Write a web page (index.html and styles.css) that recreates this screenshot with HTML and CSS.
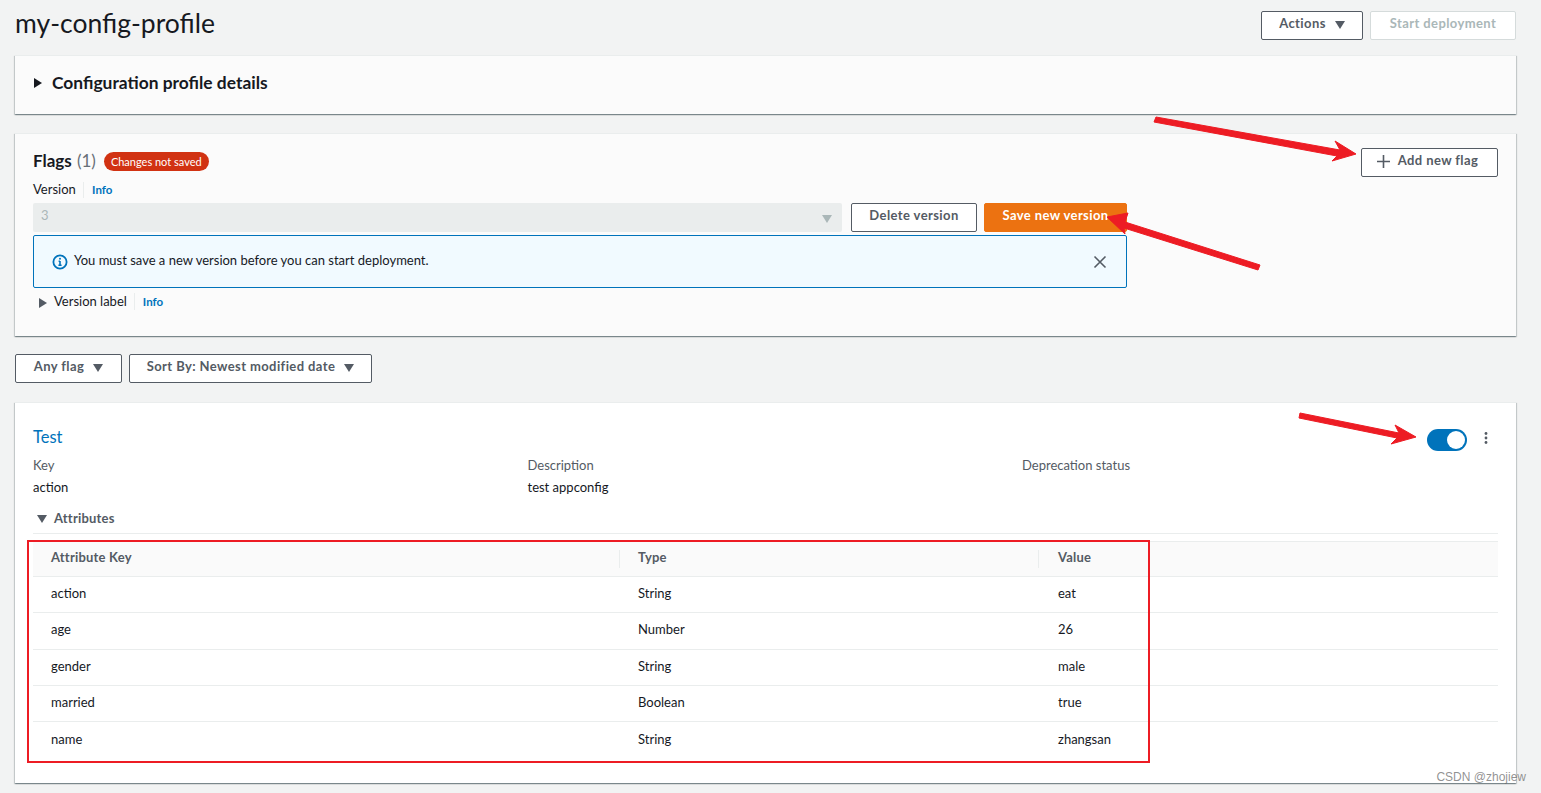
FILE: index.html
```html
<!DOCTYPE html>
<html lang="en">
<head>
    <meta charset="UTF-8">
    <meta name="viewport" content="width=device-width, initial-scale=1.0">
    <title>my-config-profile</title>
    <link rel="stylesheet" href="styles.css">
</head>
<body>
    <div class="page">
        <header class="page-header">
            <h1>my-config-profile</h1>
            <div class="header-actions">
                <button class="btn btn-actions">Actions <span class="caret"></span></button>
                <button class="btn btn-disabled">Start deployment</button>
            </div>
        </header>

        <section class="card card-details">
            <span class="tri-right tri-dark"></span>
            <h2>Configuration profile details</h2>
        </section>

        <section class="card card-flags">
            <div class="flags-head">
                <div class="flags-title">
                    <h2>Flags <span class="count">(1)</span></h2>
                    <span class="badge">Changes not saved</span>
                </div>
                <button class="btn btn-add">
                    <svg class="plus" width="13" height="13" viewBox="0 0 13 13"><path d="M6.5 0v13M0 6.5h13" stroke="#545b64" stroke-width="1.6" fill="none"/></svg>
                    Add new flag
                </button>
            </div>
            <div class="field-label">Version <a class="info" href="#">Info</a></div>
            <div class="version-row">
                <div class="select-disabled"><span class="select-value">3</span><span class="caret caret-muted"></span></div>
                <button class="btn btn-delete">Delete version</button>
                <button class="btn btn-primary">Save new version</button>
            </div>
            <div class="alert">
                <svg class="alert-icon" width="16" height="16" viewBox="0 0 16 16">
                    <circle cx="8" cy="8" r="6.6" fill="none" stroke="#0073bb" stroke-width="1.8"/>
                    <path d="M8 7v4M6.4 11.2h3.2M6.6 7.2H8" stroke="#0073bb" stroke-width="1.6" fill="none"/>
                    <circle cx="8" cy="4.8" r="1" fill="#0073bb"/>
                </svg>
                <span class="alert-text">You must save a new version before you can start deployment.</span>
                <svg class="alert-close" width="14" height="14" viewBox="0 0 14 14"><path d="M1.5 1.5l11 11M12.5 1.5l-11 11" stroke="#545b64" stroke-width="1.6" fill="none"/></svg>
            </div>
            <div class="version-label">
                <span class="tri-right"></span>
                Version label <a class="info" href="#">Info</a>
            </div>
        </section>

        <div class="filters">
            <button class="btn btn-any">Any flag <span class="caret"></span></button>
            <button class="btn btn-sort">Sort By: Newest modified date <span class="caret"></span></button>
        </div>

        <section class="card card-flag">
            <div class="flag-top">
                <a class="flag-name" href="#">Test</a>
                <div class="flag-controls">
                    <span class="toggle"><span class="knob"></span></span>
                    <svg class="dots" width="4" height="12" viewBox="0 0 4 12"><circle cx="2" cy="1.5" r="1.4" fill="#545b64"/><circle cx="2" cy="6" r="1.4" fill="#545b64"/><circle cx="2" cy="10.5" r="1.4" fill="#545b64"/></svg>
                </div>
            </div>
            <div class="flag-meta">
                <div><div class="meta-key">Key</div><div class="meta-val">action</div></div>
                <div><div class="meta-key">Description</div><div class="meta-val">test appconfig</div></div>
                <div><div class="meta-key">Deprecation status</div></div>
            </div>
            <div class="attr-head"><span class="tri-down"></span>Attributes</div>
            <table class="attr-table">
                <thead>
                    <tr><th>Attribute Key</th><th>Type</th><th>Value</th></tr>
                </thead>
                <tbody>
                    <tr><td>action</td><td>String</td><td>eat</td></tr>
                    <tr><td>age</td><td>Number</td><td>26</td></tr>
                    <tr><td>gender</td><td>String</td><td>male</td></tr>
                    <tr><td>married</td><td>Boolean</td><td>true</td></tr>
                    <tr><td>name</td><td>String</td><td>zhangsan</td></tr>
                </tbody>
            </table>
        </section>
    </div>

    <!-- red markup drawn on top of the screenshot -->
    <svg class="markup" width="1541" height="793" viewBox="0 0 1541 793">
        <g fill="#ed1c24">
            <path d="M1156 117L1340 150L1335 141L1356 154L1332 161L1337 156L1154 122Z" stroke="#ed1c24" stroke-linejoin="round"/>
            <path d="M1260 265L1125 222L1128 213L1107 217L1125 234L1124 228L1258 270Z" stroke="#ed1c24" stroke-linejoin="round"/>
            <path d="M1300 413L1399 433L1395 425L1416 437L1391 444L1397 438L1299 418Z" stroke="#ed1c24" stroke-linejoin="round"/>
        </g>
        <rect x="28" y="541" width="1121" height="221" fill="none" stroke="#ed1c24" stroke-width="2"/>
    </svg>
    <div class="watermark">CSDN @zhojiew</div>
</body>
</html>
```

FILE: styles.css
```css
* {
    box-sizing: border-box;
}
html, body {
    margin: 0;
    padding: 0;
    height: 793px;
    overflow: hidden;
}
body {
    position: relative;
    font-family: Lato, "Noto Sans", sans-serif;
    font-size: 13px;
    color: #16191f;
    background-color: #f2f3f3;
}
.page {
    padding: 11px 25px 0 15px;
}
a {
    text-decoration: none;
}
h1, h2 {
    margin: 0;
}
.page-header {
    display: flex;
    justify-content: space-between;
    align-items: flex-start;
    height: 44px;
}
.page-header h1 {
    font-size: 26.5px;
    font-weight: 400;
    line-height: 24px;
}
.header-actions {
    display: flex;
    gap: 7px;
}
.btn {
    height: 29px;
    padding: 0 0 5px;
    font-family: inherit;
    font-size: 13px;
    font-weight: 700;
    letter-spacing: .4px;
    color: #545b64;
    background-color: #fff;
    border: 1px solid #545b64;
    border-radius: 2px;
    display: flex;
    align-items: center;
    justify-content: center;
}
.btn-actions { width: 102px; gap: 9px; }
.btn-disabled {
    width: 146px;
    color: #aab7b8;
    border-color: #d5dbdb;
}
.btn-add { width: 137px; gap: 8px; padding-right: 4px; }
.btn-delete { width: 126px; margin-left: 9px; }
.btn-primary {
    width: 143px;
    margin-left: 7px;
    color: #fff;
    background-color: #ec7211;
    border-color: #ec7211;
}
.btn-any { width: 107px; gap: 9px; }
.btn-sort { width: 243px; gap: 9px; }
.plus {
    margin-top: 4px;
}
.caret {
    display: inline-block;
    width: 0;
    height: 0;
    margin-top: 3px;
    border-left: 5px solid transparent;
    border-right: 5px solid transparent;
    border-top: 8px solid #545b64;
}
.caret-muted {
    border-top-color: #aab7b8;
}
.card {
    background-color: #fbfbfb;
    border-top: 1px solid #eaeded;
    box-shadow: 0 1px 1px 0 rgba(0,28,36,.3), 1px 1px 1px 0 rgba(0,28,36,.15), -1px 1px 1px 0 rgba(0,28,36,.15);
}
.card-details {
    height: 59px;
    padding: 0 0 4px 19px;
    display: flex;
    align-items: center;
    gap: 10px;
    margin-bottom: 19px;
}
.card-details h2 {
    font-size: 17.4px;
    line-height: 20px;
    font-weight: 700;
}
.tri-right {
    display: inline-block;
    width: 0;
    height: 0;
    border-top: 5px solid transparent;
    border-bottom: 5px solid transparent;
    border-left: 8px solid #545b64;
}
.tri-dark {
    border-left-color: #16191f;
}
.tri-down {
    display: inline-block;
    width: 0;
    height: 0;
    border-left: 5px solid transparent;
    border-right: 5px solid transparent;
    border-top: 8px solid #545b64;
    margin: 0 7px 0 4px;
}
.card-flags {
    height: 203px;
    padding: 13px 18px 0;
    margin-bottom: 18px;
}
.flags-head {
    display: flex;
    justify-content: space-between;
    align-items: center;
    height: 30px;
}
.flags-title {
    display: flex;
    align-items: center;
    gap: 8px;
    padding-bottom: 2px;
}
.flags-title h2 {
    font-size: 17px;
    line-height: 20px;
    font-weight: 700;
}
.count {
    font-weight: 400;
    color: #687078;
    margin-left: 1px;
}
.badge {
    height: 19px;
    margin-top: 1px;
    padding: 0 7px;
    font-size: 11px;
    line-height: 19px;
    color: #fff;
    background-color: #d13212;
    border-radius: 10px;
}
.field-label {
    margin-top: 4px;
    height: 22px;
    line-height: 16px;
}
.info {
    display: inline-block;
    margin-left: 4px;
    padding-left: 8px;
    font-size: 11.5px;
    font-weight: 700;
    color: #0073bb;
    border-left: 1px solid #eaeded;
}
.version-row {
    display: flex;
    width: 1094px;
}
.select-disabled {
    flex: 1;
    height: 29px;
    padding: 0 10px 0 8px;
    display: flex;
    align-items: center;
    justify-content: space-between;
    color: #aab7b8;
    background-color: #eaeded;
    border-radius: 2px;
}
.select-value {
    padding-bottom: 6px;
}
.alert {
    width: 1094px;
    height: 53px;
    margin-top: 3px;
    padding: 0 19px 0 18px;
    display: flex;
    align-items: center;
    background-color: #f1faff;
    border: 1px solid #0073bb;
    border-radius: 2px;
}
.alert-icon {
    margin-right: 6px;
}
.alert-text {
    flex: 1;
    padding-bottom: 3px;
}
.version-label {
    margin-top: 5px;
    padding-left: 6px;
    height: 17px;
    line-height: 17px;
    display: flex;
    align-items: center;
}
.version-label .tri-right {
    margin-right: 7px;
    margin-top: 2px;
}
.version-label .info {
    margin-left: 7px;
}
.filters {
    display: flex;
    gap: 7px;
    margin-bottom: 19px;
}
.card-flag {
    height: 381px;
    padding: 0 18px;
    background-color: #fff;
}
.flag-top {
    display: flex;
    justify-content: space-between;
    align-items: flex-start;
    padding-top: 24px;
    height: 48px;
}
.flag-name {
    font-size: 16.5px;
    line-height: 20px;
    color: #0073bb;
}
.flag-controls {
    display: flex;
    align-items: flex-start;
    gap: 17px;
    padding-right: 10px;
    margin-top: 2px;
}
.dots {
    margin-top: 3px;
}
.toggle {
    width: 40px;
    height: 22px;
    display: block;
    padding: 2px;
    background-color: #0073bb;
    border-radius: 11px;
}
.knob {
    display: block;
    width: 18px;
    height: 18px;
    margin-left: 18px;
    background-color: #fff;
    border-radius: 50%;
}
.flag-meta {
    display: grid;
    grid-template-columns: 494.5px 494.5px 1fr;
    margin-top: 5px;
    height: 44px;
}
.meta-key {
    color: #545b64;
    line-height: 18px;
    margin-bottom: 4px;
}
.meta-val {
    line-height: 18px;
}
.attr-head {
    height: 34px;
    padding-top: 9px;
    line-height: 18px;
    font-weight: 700;
    letter-spacing: .2px;
    color: #545b64;
    display: flex;
    align-items: flex-start;
    border-bottom: 1px solid #eaeded;
}
.attr-head .tri-down {
    margin-top: 6px;
}
.attr-table {
    width: 100%;
    table-layout: fixed;
    margin-top: 7px;
    border-collapse: collapse;
}
.attr-table th:nth-child(1) { width: 587px; }
.attr-table th:nth-child(2) { width: 419px; }
.attr-table th {
    position: relative;
    height: 35px;
    padding: 0 18px 4px;
    text-align: left;
    font-weight: 700;
    letter-spacing: .2px;
    color: #545b64;
    background-color: #fafafa;
    border-top: 1px solid #eaeded;
    border-bottom: 1px solid #eaeded;
}
.attr-table th + th::before {
    content: "";
    position: absolute;
    left: -1px;
    top: 8px;
    bottom: 8px;
    width: 1px;
    background-color: #eaeded;
}
.attr-table td {
    height: 36.3px;
    padding: 0 18px 3px;
    border-bottom: 1px solid #eaeded;
}
.attr-table th:nth-child(3),
.attr-table td:nth-child(3) {
    padding-left: 19px;
}
.attr-table tr:last-child td {
    border-bottom: 0;
}
.markup {
    position: absolute;
    left: 0;
    top: 0;
    pointer-events: none;
}
.watermark {
    position: absolute;
    right: 15px;
    top: 770px;
    font-family: "Liberation Sans", sans-serif;
    font-size: 12px;
    color: rgba(110,110,110,.75);
}
```
